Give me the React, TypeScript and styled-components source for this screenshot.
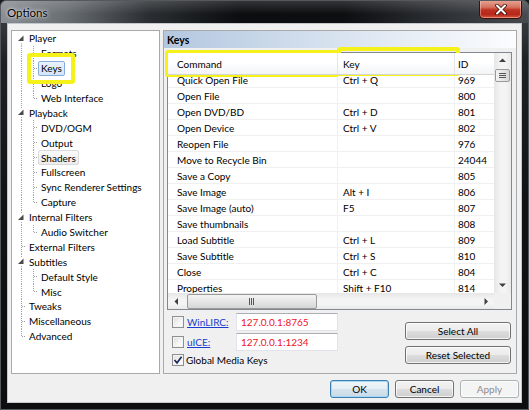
import * as React from 'react';
import styled, { createGlobalStyle } from 'styled-components';

const GlobalStyle = createGlobalStyle`
  html, body {
    margin: 0;
    padding: 0;
    background: #1b1e21;
  }
  body {
    font-family: Lato, "Noto Sans", sans-serif;
    font-size: 10px;
    color: #000;
  }
  * { box-sizing: border-box; }
`;

const Window = styled.div`
  position: relative;
  width: 529px;
  height: 410px;
  display: flex;
  flex-direction: column;
  overflow: hidden;
  background: linear-gradient(180deg, #41464a 0px, #1f2225 60px, #111315 200px, #0b0d0f 100%);
  border: 1px solid #55595d;
  border-radius: 6px 6px 0 0;
`;

const TitleBar = styled.div`
  position: relative;
  height: 22px;
  flex: none;
  display: flex;
  align-items: center;
  padding-left: 6px;
  background:
    linear-gradient(180deg, rgba(255, 255, 255, 0.16) 0%, rgba(255, 255, 255, 0) 60%),
    linear-gradient(90deg, #8a8f95 0%, #6a6f74 12%, #2a2e32 28%, #0b0d0f 45%, #0c0e10 65%, #272a2e 80%, #474b4f 100%);
`;

const Title = styled.span`
  font-size: 11.5px;
  color: #000;
  text-shadow: 0 0 5px rgba(255, 255, 255, 0.9), 0 0 2px rgba(255, 255, 255, 0.8);
`;

const CloseButton = styled.div`
  position: absolute;
  top: -1px;
  right: 6px;
  width: 43px;
  height: 19px;
  display: flex;
  align-items: center;
  justify-content: center;
  border: 1px solid #3b0f0a;
  border-top: none;
  border-radius: 0 0 5px 5px;
  background: linear-gradient(180deg, #e8a999 0%, #d6715f 40%, #c0321f 55%, #b5271a 80%, #d65a3e 100%);
  box-shadow: inset 0 0 0 1px rgba(255, 210, 200, 0.45);
`;

const FrameBody = styled.div`
  flex: 1;
  display: flex;
  padding: 0 6px 6px 6px;
`;

const Client = styled.div`
  flex: 1;
  display: flex;
  flex-direction: column;
  background: #f0f0f0;
  border: 1px solid #c3c8cd;
  padding: 6px 0 4px 3px;
`;

const Main = styled.div`
  height: 344px;
  display: flex;
  gap: 3px;
  padding-right: 4px;
`;

const TreePanel = styled.div`
  width: 149px;
  height: 100%;
  background: #fff;
  border: 1px solid #a9a9a9;
  display: flex;
  flex-direction: column;
`;

const TreeRow = styled.div`
  height: 14.9px;
  display: flex;
  align-items: stretch;
  white-space: nowrap;
`;

const TreeLabel = styled.span<{ $state?: 'selected' | 'hot' }>`
  display: flex;
  align-items: center;
  padding: 0 2px;
  border: 1px solid transparent;
  border-radius: 2px;
  ${p =>
    p.$state === 'selected' &&
    `
    border-color: #84acdd;
    background: linear-gradient(180deg, #eaf3fd 0%, #d3e5fa 100%);
  `}
  ${p =>
    p.$state === 'hot' &&
    `
    border-color: #d9d9d9;
    background: linear-gradient(180deg, #fafafa 0%, #ececec 100%);
  `}
`;

const PagePanel = styled.div`
  width: 354px;
  height: 100%;
  border: 1px solid #a9a9a9;
  display: flex;
  flex-direction: column;
`;

const PageHeader = styled.div`
  height: 17px;
  flex: none;
  display: flex;
  align-items: center;
  padding-left: 3px;
  font-size: 10.5px;
  font-weight: bold;
  background: linear-gradient(90deg, #b3c7df 0%, #cddbeb 35%, #e8eef6 70%, #fbfcfe 100%);
`;

const ListView = styled.div`
  height: 258px;
  flex: none;
  margin: 4px 4px 0 3px;
  border: 1px solid #828790;
  background: #fff;
  display: grid;
  grid-template-columns: 1fr 17px;
  grid-template-rows: 1fr 16px;
`;

const Viewport = styled.div`
  position: relative;
  overflow: hidden;
  display: flex;
  flex-direction: column;
`;

const HeaderRow = styled.div`
  position: relative;
  z-index: 1;
  height: 22px;
  flex: none;
  display: grid;
  grid-template-columns: 170px 117px 60px;
  background: linear-gradient(180deg, #ffffff 0%, #ffffff 45%, #f3f4f6 100%);
  border-bottom: 1px solid #d5d5d5;
`;

const HeaderCell = styled.div<{ $pad: number }>`
  display: flex;
  align-items: center;
  padding-left: ${p => p.$pad}px;
  border-right: 1px solid #e3e5e8;
`;

const Rows = styled.div`
  margin-top: -3px;
`;

const DataRow = styled.div`
  height: 16px;
  display: grid;
  grid-template-columns: 170px 117px 60px;
  border-bottom: 1px solid #f0f0f0;
`;

const DataCell = styled.div<{ $pad: number }>`
  display: flex;
  align-items: center;
  padding-left: ${p => p.$pad}px;
  border-right: 1px solid #f0f0f0;
  white-space: nowrap;
  overflow: hidden;
`;

const VScroll = styled.div`
  display: flex;
  flex-direction: column;
  align-items: center;
  background: linear-gradient(90deg, #e6e6e6 0%, #f4f4f4 40%, #f4f4f4 70%, #e9e9e9 100%);
`;

const HScroll = styled.div`
  display: flex;
  align-items: center;
  background: linear-gradient(180deg, #e6e6e6 0%, #f4f4f4 40%, #f4f4f4 70%, #e9e9e9 100%);
`;

const ArrowBox = styled.div<{ $size: number }>`
  width: ${p => p.$size}px;
  height: ${p => p.$size}px;
  flex: none;
  display: flex;
  align-items: center;
  justify-content: center;
`;

const Track = styled.div`
  flex: 1;
  display: flex;
`;

const VThumb = styled.div`
  width: 15px;
  height: 13px;
  margin: 1px auto 0;
  border: 1px solid #9a9a9a;
  border-radius: 2px;
  background: linear-gradient(90deg, #f3f3f3 0%, #e6e6e6 50%, #d6d6d6 100%);
  display: flex;
  align-items: center;
  justify-content: center;
`;

const HThumb = styled.div`
  width: 130px;
  height: 15px;
  margin: auto 0 auto 3px;
  border: 1px solid #9a9a9a;
  border-radius: 2px;
  background: linear-gradient(180deg, #f3f3f3 0%, #e6e6e6 50%, #d6d6d6 100%);
  display: flex;
  align-items: center;
  justify-content: center;
`;

const Corner = styled.div`
  background: #f0f0f0;
`;

const Controls = styled.div`
  flex: 1;
  display: flex;
  justify-content: space-between;
  align-items: flex-start;
  padding: 3px 5px 0 8px;
`;

const OptionColumn = styled.div`
  display: flex;
  flex-direction: column;
  gap: 2px;
`;

const OptionRow = styled.div<{ $short?: boolean }>`
  display: flex;
  align-items: center;
  height: ${p => (p.$short ? 14 : 18)}px;
`;

const CheckBox = styled.span`
  width: 12px;
  height: 12px;
  flex: none;
  border: 1px solid #8e8f8f;
  background: linear-gradient(135deg, #dcdcdc 0%, #f6f6f6 60%, #ffffff 100%);
  box-shadow: inset 0 0 0 1px #f4f4f4;
  display: flex;
  align-items: center;
  justify-content: center;
`;

const LinkLabel = styled.span`
  width: 49px;
  margin-left: 3px;
  color: #1a3dcf;
  text-decoration: underline;
`;

const PlainLabel = styled.span`
  margin-left: 2px;
`;

const AddressBox = styled.div`
  width: 102px;
  height: 18px;
  display: flex;
  align-items: center;
  padding-left: 4px;
  background: #fff;
  border: 1px solid #e2e3ea;
  border-top-color: #abadb3;
  color: #f0141e;
`;

const ButtonColumn = styled.div`
  display: flex;
  flex-direction: column;
  gap: 6px;
  margin-top: 9px;
`;

const Button = styled.div<{ $width: number; $primary?: boolean; $disabled?: boolean }>`
  width: ${p => p.$width}px;
  height: 18px;
  display: flex;
  align-items: center;
  justify-content: center;
  border-radius: 3px;
  border: 1px solid ${p => (p.$primary ? '#3c7fb1' : p.$disabled ? '#adb2b5' : '#707070')};
  color: ${p => (p.$disabled ? '#8c8c8c' : '#000')};
  background: ${p =>
    p.$disabled
      ? '#f4f4f4'
      : p.$primary
      ? 'linear-gradient(180deg, #f0f6fa 0%, #e6eff5 50%, #d6e4ee 50%, #c9dbe7 100%)'
      : 'linear-gradient(180deg, #f2f2f2 0%, #ebebeb 50%, #dddddd 50%, #cfcfcf 100%)'};
  box-shadow: inset 0 0 0 1px ${p => (p.$primary ? '#a7d8f5' : 'rgba(255, 255, 255, 0.75)')};
`;

const ButtonBar = styled.div`
  display: flex;
  justify-content: flex-end;
  gap: 6px;
  padding: 6px 2px 0 0;
`;

const Highlight = styled.div<{ $x: number; $y: number; $w: number; $h: number }>`
  position: absolute;
  left: ${p => p.$x}px;
  top: ${p => p.$y}px;
  width: ${p => p.$w}px;
  height: ${p => p.$h}px;
  border: 4px solid #f4f21a;
  border-radius: 3px;
  pointer-events: none;
`;

type TreeItem = {
  label: string;
  level: 0 | 1;
  expander?: boolean;
  first?: boolean;
  last?: boolean;
  lastChild?: boolean;
  state?: 'selected' | 'hot';
};

const tree: TreeItem[] = [
  { label: 'Player', level: 0, expander: true, first: true },
  { label: 'Formats', level: 1 },
  { label: 'Keys', level: 1, state: 'selected' },
  { label: 'Logo', level: 1 },
  { label: 'Web Interface', level: 1, lastChild: true },
  { label: 'Playback', level: 0, expander: true },
  { label: 'DVD/OGM', level: 1 },
  { label: 'Output', level: 1 },
  { label: 'Shaders', level: 1, state: 'hot' },
  { label: 'Fullscreen', level: 1 },
  { label: 'Sync Renderer Settings', level: 1 },
  { label: 'Capture', level: 1, lastChild: true },
  { label: 'Internal Filters', level: 0, expander: true },
  { label: 'Audio Switcher', level: 1, lastChild: true },
  { label: 'External Filters', level: 0 },
  { label: 'Subtitles', level: 0, expander: true },
  { label: 'Default Style', level: 1 },
  { label: 'Misc', level: 1, lastChild: true },
  { label: 'Tweaks', level: 0 },
  { label: 'Miscellaneous', level: 0 },
  { label: 'Advanced', level: 0, last: true },
];

const columns = [
  { title: 'Command', pad: 9 },
  { title: 'Key', pad: 5 },
  { title: 'ID', pad: 3 },
];

const commands: [string, string, string][] = [
  ['Quick Open File', 'Ctrl + Q', '969'],
  ['Open File', '', '800'],
  ['Open DVD/BD', 'Ctrl + D', '801'],
  ['Open Device', 'Ctrl + V', '802'],
  ['Reopen File', '', '976'],
  ['Move to Recycle Bin', '', '24044'],
  ['Save a Copy', '', '805'],
  ['Save Image', 'Alt + I', '806'],
  ['Save Image (auto)', 'F5', '807'],
  ['Save thumbnails', '', '808'],
  ['Load Subtitle', 'Ctrl + L', '809'],
  ['Save Subtitle', 'Ctrl + S', '810'],
  ['Close', 'Ctrl + C', '804'],
  ['Properties', 'Shift + F10', '814'],
];

const DOT = '#a0a0a0';

const Connector: React.FC<{ item: TreeItem }> = ({ item }) => {
  const w = item.level ? 26 : 14;
  const h = 14.9;
  const mid = 7.5;
  const rootTop = item.first ? mid : 0;
  const rootBottom = item.last ? mid : h;
  return (
    <svg width={w} height={h} style={{ flex: 'none' }}>
      <line x1={9.5} y1={rootTop} x2={9.5} y2={rootBottom} stroke={DOT} strokeDasharray="1 1" />
      {item.level === 0 && !item.expander && (
        <line x1={10} y1={mid} x2={14} y2={mid} stroke={DOT} strokeDasharray="1 1" />
      )}
      {item.level === 0 && item.expander && (
        <>
          <rect x={5} y={3} width={9} height={9} fill="#fff" />
          <polygon points="11.5,4.5 11.5,10 6,10" fill="#4a4a4a" />
        </>
      )}
      {item.level === 1 && (
        <>
          <line x1={21.5} y1={0} x2={21.5} y2={item.lastChild ? mid : h} stroke={DOT} strokeDasharray="1 1" />
          <line x1={22} y1={mid} x2={26} y2={mid} stroke={DOT} strokeDasharray="1 1" />
        </>
      )}
    </svg>
  );
};

const Arrow: React.FC<{ dir: 'up' | 'down' | 'left' | 'right' }> = ({ dir }) => {
  const pts = {
    up: '0,4 3.5,0.5 7,4',
    down: '0,0.5 3.5,4 7,0.5',
    left: '4,0 0.5,3.5 4,7',
    right: '0.5,0 4,3.5 0.5,7',
  }[dir];
  const vertical = dir === 'up' || dir === 'down';
  return (
    <svg width={vertical ? 7 : 5} height={vertical ? 5 : 7}>
      <polygon points={pts} fill="#404040" />
    </svg>
  );
};

const Checkmark = () => (
  <svg width="10" height="10" viewBox="0 0 10 10">
    <path d="M1.5 5 L4 7.8 L8.6 1.8" fill="none" stroke="#1c2b5a" strokeWidth="1.7" />
  </svg>
);

const App: React.FC = () => {
  return (
    <>
      <GlobalStyle />
      <Window>
        <TitleBar>
          <Title>Options</Title>
          <CloseButton>
            <svg width="14" height="11" viewBox="0 0 14 11">
              <path d="M3 1.5 L11 9.5 M11 1.5 L3 9.5" stroke="#3b0d08" strokeWidth="3.6" strokeLinecap="round" />
              <path d="M3 1.5 L11 9.5 M11 1.5 L3 9.5" stroke="#ffffff" strokeWidth="2" strokeLinecap="round" />
            </svg>
          </CloseButton>
        </TitleBar>
        <FrameBody>
          <Client>
            <Main>
              <TreePanel>
                {tree.map(item => (
                  <TreeRow key={item.label}>
                    <Connector item={item} />
                    <TreeLabel $state={item.state}>{item.label}</TreeLabel>
                  </TreeRow>
                ))}
              </TreePanel>
              <PagePanel>
                <PageHeader>Keys</PageHeader>
                <ListView>
                  <Viewport>
                    <HeaderRow>
                      {columns.map(c => (
                        <HeaderCell key={c.title} $pad={c.pad}>
                          {c.title}
                        </HeaderCell>
                      ))}
                    </HeaderRow>
                    <Rows>
                      {commands.map(row => (
                        <DataRow key={row[0]}>
                          {row.map((cell, i) => (
                            <DataCell key={i} $pad={columns[i].pad}>
                              {cell}
                            </DataCell>
                          ))}
                        </DataRow>
                      ))}
                    </Rows>
                  </Viewport>
                  <VScroll>
                    <ArrowBox $size={15}>
                      <Arrow dir="up" />
                    </ArrowBox>
                    <Track>
                      <VThumb>
                        <svg width="7" height="6">
                          <path d="M0 0.5 H7 M0 2.5 H7 M0 4.5 H7" stroke="#555" />
                        </svg>
                      </VThumb>
                    </Track>
                    <ArrowBox $size={15}>
                      <Arrow dir="down" />
                    </ArrowBox>
                  </VScroll>
                  <HScroll>
                    <ArrowBox $size={16}>
                      <Arrow dir="left" />
                    </ArrowBox>
                    <Track>
                      <HThumb>
                        <svg width="6" height="7">
                          <path d="M0.5 0 V7 M2.5 0 V7 M4.5 0 V7" stroke="#555" />
                        </svg>
                      </HThumb>
                    </Track>
                    <ArrowBox $size={16}>
                      <Arrow dir="right" />
                    </ArrowBox>
                  </HScroll>
                  <Corner />
                </ListView>
                <Controls>
                  <OptionColumn>
                    <OptionRow>
                      <CheckBox />
                      <LinkLabel>WinLIRC:</LinkLabel>
                      <AddressBox>127.0.0.1:8765</AddressBox>
                    </OptionRow>
                    <OptionRow>
                      <CheckBox />
                      <LinkLabel>uICE:</LinkLabel>
                      <AddressBox>127.0.0.1:1234</AddressBox>
                    </OptionRow>
                    <OptionRow $short>
                      <CheckBox>
                        <Checkmark />
                      </CheckBox>
                      <PlainLabel>Global Media Keys</PlainLabel>
                    </OptionRow>
                  </OptionColumn>
                  <ButtonColumn>
                    <Button $width={106}>Select All</Button>
                    <Button $width={106}>Reset Selected</Button>
                  </ButtonColumn>
                </Controls>
              </PagePanel>
            </Main>
            <ButtonBar>
              <Button $width={59} $primary>OK</Button>
              <Button $width={59}>Cancel</Button>
              <Button $width={59} $disabled>Apply</Button>
            </ButtonBar>
          </Client>
        </FrameBody>
        <Highlight $x={26} $y={52} $w={48} $h={31} />
        <Highlight $x={164} $y={49} $w={174} $h={27} />
        <Highlight $x={336} $y={46} $w={123} $h={29} />
      </Window>
    </>
  );
};

export default App;
